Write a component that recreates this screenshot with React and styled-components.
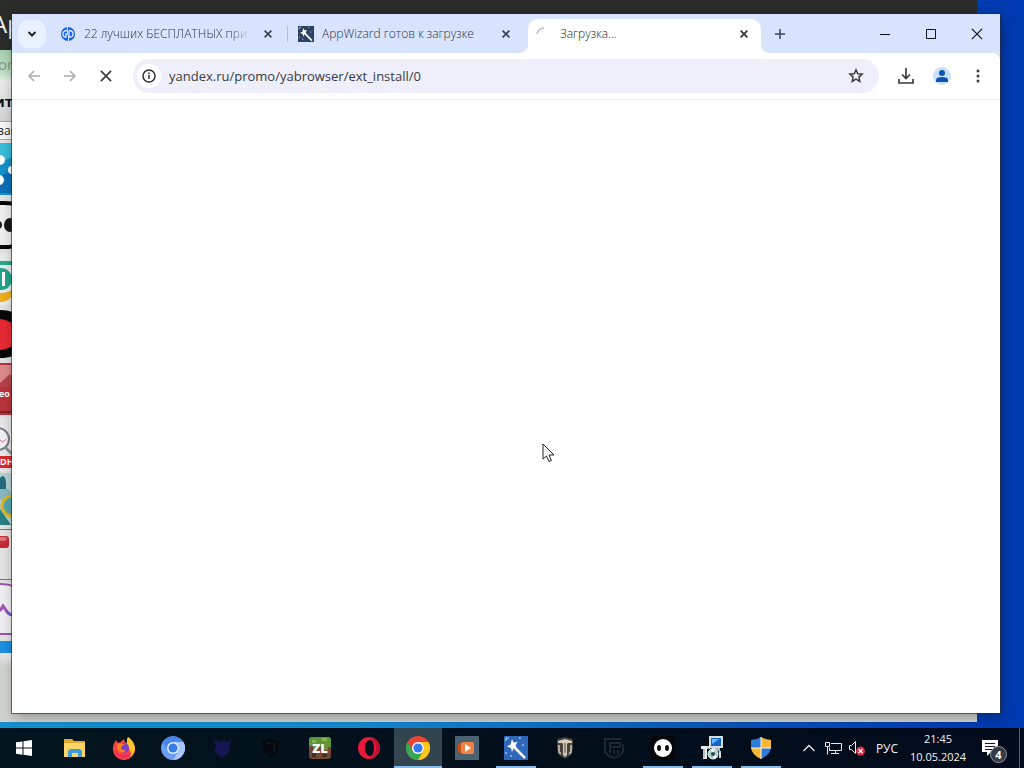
import styled, { createGlobalStyle } from "styled-components";

const GlobalStyle = createGlobalStyle`
  * {
    box-sizing: border-box;
  }

  body {
    margin: 0;
    font-family: "Open Sans", "Noto Sans", sans-serif;
  }

  button {
    border: 0;
    padding: 0;
    background: none;
    font: inherit;
    color: inherit;
  }
`;

const Screen = styled.div`
  display: flex;
  flex-direction: column;
  height: 100vh;
  overflow: hidden;
  background: linear-gradient(to right, #1690cc 0%, #118bd0 35%, #0a55bb 70%, #013bb2 94%);
`;

const Desktop = styled.main`
  flex: 1;
  position: relative;
`;

/* Store window behind the browser */

const StoreWindow = styled.section`
  position: absolute;
  inset: 0 47px 6px 0;
  overflow: hidden;
  display: flex;
  flex-direction: column;
  background: #d0d2cf;
`;

const StoreTitle = styled.header`
  height: 50px;
  padding-top: 8px;
  background: #2a2c29;
  color: #f4f4f4;
  font-size: 24px;
  line-height: 32px;
  text-indent: -8px;
`;

const StoreBanner = styled.div`
  height: 30px;
  background: linear-gradient(#a5cfae, #b9dcc0 70%, #dcebe0);
  color: #7d9a85;
  font-size: 15px;
  line-height: 28px;
  text-indent: -2px;
`;

const StoreHeading = styled.h2`
  height: 41px;
  margin: 0;
  background: linear-gradient(#ececec, #d2d2d4);
  color: #111;
  font-size: 15px;
  line-height: 42px;
  text-indent: -6px;
`;

const StoreFilter = styled.div`
  height: 19px;
  border: 1px solid #aaa;
  border-width: 1px 0;
  background: #f7f7f7;
  color: #222;
  font-size: 12px;
  line-height: 17px;
  text-indent: -3px;
`;

const TileList = styled.div`
  display: flex;
  flex-direction: column;
  gap: 3px;
  padding: 3px 0 6px;
  background: #e2e2e4;

  svg {
    display: block;
  }
`;

const StoreFooter = styled.div`
  height: 12px;
  background: #1c8ee0;
  box-shadow: 0 8px 8px #f2f2f4;
`;

/* Browser */

const BrowserWindow = styled.section`
  position: absolute;
  inset: 14px 24px 15px 12px;
  display: flex;
  flex-direction: column;
  background: #fff;
  box-shadow: 0 0 0 1px rgba(40, 44, 50, 0.65), 2px 3px 12px rgba(0, 0, 0, 0.35);
`;

const TabStrip = styled.div`
  display: flex;
  align-items: center;
  height: 39px;
  padding-left: 6px;
  background: #d8e3fe;
`;

const TabSearch = styled.button`
  display: grid;
  place-items: center;
  width: 28px;
  height: 28px;
  margin-right: 6px;
  border-radius: 10px;
  background: #e9f0ff;
`;

const Tab = styled.div`
  position: relative;
  display: flex;
  align-items: center;
  gap: 8px;
  flex: 0 1 ${({ $active }) => ($active ? "233px" : "238px")};
  min-width: 0;
  height: 29px;
  padding: 0 ${({ $active }) => ($active ? "9px" : "14px")} 0 8px;
  color: #2c3648;

  ${({ $active }) =>
    $active &&
    `
    align-self: flex-end;
    height: 34px;
    padding-bottom: 5px;
    border-radius: 10px 10px 0 0;
    background: #fff;
    color: #222;

    &::before,
    &::after {
      content: "";
      position: absolute;
      bottom: 0;
      width: 10px;
      height: 10px;
    }

    &::before {
      right: 100%;
      background: radial-gradient(circle at 0 0, transparent 10px, #fff 11px);
    }

    &::after {
      left: 100%;
      background: radial-gradient(circle at 100% 0, transparent 10px, #fff 11px);
    }
  `}

  ${({ $divider }) =>
    $divider &&
    `
    &::after {
      content: "";
      position: absolute;
      right: 2px;
      top: 7px;
      width: 1px;
      height: 16px;
      background: #a9bfe8;
    }
  `}
`;

const TabIcon = styled.svg`
  flex: none;
  width: 16px;
  height: 16px;
`;

const TabTitle = styled.span`
  flex: 1;
  min-width: 0;
  overflow: hidden;
  font-size: 12px;
  font-weight: 300;
  line-height: 18px;
  white-space: nowrap;
  margin-right: ${({ $fade }) => ($fade ? "2px" : "0")};
  mask-image: ${({ $fade }) => ($fade ? "linear-gradient(to left, transparent, #000 20px)" : "none")};
`;

const TabClose = styled.button`
  display: grid;
  place-items: center;
  flex: none;
  width: 16px;
  height: 16px;
`;

const NewTab = styled.button`
  display: grid;
  place-items: center;
  width: 28px;
  height: 28px;
  margin-left: 5px;
`;

const WindowControls = styled.div`
  display: flex;
  align-self: stretch;
  margin-left: auto;
`;

const WindowButton = styled.button`
  display: grid;
  place-items: center;
  width: 46px;
`;

const ToolbarBack = styled.div`
  background: #d8e3fe;
`;

const Toolbar = styled.div`
  display: flex;
  align-items: center;
  height: 47px;
  padding: 0 4px;
  border-bottom: 1px solid #e9ebf0;
  border-radius: 0 8px 0 0;
  background: #fff;
`;

const ToolButton = styled.button`
  display: grid;
  place-items: center;
  width: 36px;
  height: 34px;
  color: ${({ $dim }) => ($dim ? "#a9a9a9" : "#3c3c3e")};
`;

const AddressBar = styled.div`
  display: flex;
  align-items: center;
  flex: 1;
  min-width: 0;
  height: 34px;
  margin: 0 9px;
  padding: 0 5px 0 4px;
  border-radius: 17px;
  background: #eeeffb;
`;

const SiteInfo = styled.button`
  display: grid;
  place-items: center;
  width: 24px;
  height: 24px;
  border-radius: 12px;
  background: #fff;
`;

const Address = styled.input`
  flex: 1;
  min-width: 0;
  margin-left: 8px;
  padding: 0;
  border: 0;
  outline: 0;
  background: none;
  color: #3a3a3e;
  font-family: inherit;
  font-size: 13px;
  line-height: 20px;
`;

const Page = styled.div`
  flex: 1;
  background: #fff;
`;

const Pointer = styled.svg`
  position: absolute;
  left: 542px;
  top: 443px;
  width: 13px;
  height: 20px;
`;

/* Taskbar */

const Taskbar = styled.footer`
  display: flex;
  height: 40px;
  background: linear-gradient(to right, #02151f, #020e1a 60%, #010b1c);
  color: #f1f4f7;
`;

const StartButton = styled.button`
  display: grid;
  place-items: center;
  width: 48px;
  margin-right: 3px;
`;

const AppList = styled.nav`
  display: flex;
  gap: 1px;
`;

const AppButton = styled.button`
  display: flex;
  flex-direction: column;
  align-items: center;
  width: 48px;
  padding-top: 8px;
  background: ${({ $active }) => ($active ? "#33454f" : "transparent")};

  &::after {
    content: "";
    width: ${({ $active }) => ($active ? "48px" : "40px")};
    height: 2px;
    margin-top: auto;
    background: ${({ $active, $running }) => ($active || $running ? "#84bdec" : "transparent")};
  }
`;

const Tray = styled.div`
  display: flex;
  align-items: center;
  margin-left: auto;
  padding-right: 4px;
`;

const TrayButton = styled.button`
  display: grid;
  place-items: center;
  width: 24px;
  height: 40px;
`;

const Language = styled.button`
  width: 36px;
  height: 40px;
  font-size: 12px;
`;

const Clock = styled.button`
  width: 66px;
  height: 40px;
  font-size: 11px;
  line-height: 18px;
`;

const Notifications = styled.button`
  display: grid;
  place-items: center;
  position: relative;
  width: 49px;
  height: 40px;
  padding-right: 10px;
  border-right: 1px solid #56606b;
`;

const Badge = styled.span`
  position: absolute;
  left: 19px;
  top: 18px;
  width: 17px;
  height: 17px;
  border: 1px solid #8d949b;
  border-radius: 50%;
  background: #343b44;
  color: #fff;
  font-size: 11px;
  font-weight: 700;
  line-height: 15px;
`;

const tiles = [
  <>
    <rect width="12" height="52" fill="#1692c8" />
    <path d="M0 0h12v14L0 20z" fill="#37bcd8" />
    <path d="M0 34l12-8v24H0z" fill="#0c70b8" />
    <circle cx="0" cy="17" r="5" fill="#fff" />
    <circle cx="12" cy="27" r="4" fill="#fff" />
    <circle cx="-1" cy="37" r="5" fill="#fff" />
  </>,
  <>
    <path d="M-20 5h24q12 0 16 4v36q-4 4-16 4h-24z" fill="#eee" stroke="#090909" strokeWidth="4" />
    <circle cx="-2" cy="27" r="4" fill="#161616" />
    <ellipse cx="10" cy="27" rx="6" ry="7" fill="#161616" />
  </>,
  <>
    <rect width="12" height="52" fill="#e9ecea" />
    <path d="M0 8h12v4H0z" fill="#25a98a" />
    <circle cx="1" cy="26" r="11" fill="#22a58a" />
    <path d="M2 19h3v14H2z" fill="#fff" />
    <path d="M0 40q8 0 12-3v6q-4 6-12 6z" fill="#f0ad1c" />
  </>,
  <>
    <path d="M0 2q8 0 12 2v44q-4 2-12 2z" fill="#080808" />
    <path d="M0 11q9 1 12 5v22q-4 3-12 4z" fill="#e72a33" />
  </>,
  <>
    <rect width="12" height="52" fill="#b9343a" />
    <rect y="2" width="12" height="20" fill="#dc8b8b" />
    <path d="M0 20l10-9 2 3v10H0z" fill="#b84349" />
    <text x="-1" y="34" fill="#fff" fontSize="9" fontWeight="700">eo</text>
    <path d="M0 48h12v2H0z" fill="#7e2528" />
  </>,
  <>
    <rect width="12" height="52" fill="#e6e7e8" />
    <circle cx="-2" cy="21" r="11" fill="#eef0f4" stroke="#777b82" strokeWidth="2" />
    <path d="M0 22l3 2 3-3" fill="none" stroke="#d77886" />
    <path d="M5 29l7 7" stroke="#87919a" strokeWidth="3" />
    <rect y="38" width="12" height="12" fill="#d72a2b" />
    <text x="0" y="47" fill="#fff" fontSize="9" fontWeight="700">DH</text>
  </>,
  <>
    <rect width="12" height="52" fill="#b7d0d3" />
    <path d="M0 5q5-6 6 5v6H0z" fill="#246b82" />
    <path d="M0 16h8l4 6v5H0z" fill="#8ab8bf" />
    <circle cx="12" cy="33" r="10" fill="#55a7ad" stroke="#ddb524" strokeWidth="3" />
    <path d="M0 36l11 16H0z" fill="#268081" />
  </>,
  <>
    <rect width="12" height="52" fill="#e3e3e3" />
    <path d="M0 1h12v1H0zM0 51h12v1H0z" fill="#777" />
    <rect x="-8" y="8" width="17" height="12" rx="3" fill="#c42d39" />
    <rect x="-8" y="9" width="15" height="4" rx="2" fill="#dd7378" />
  </>,
  <>
    <rect width="12" height="52" fill="#efeff2" />
    <path d="M0 1q8 0 12 2M0 51h12" fill="none" stroke="#9854b3" strokeWidth="2" />
    <path d="M0 28l3-5 5 7 4 2" fill="none" stroke="#a653b4" strokeWidth="3" />
    <path d="M7 28l3 4 2-1" fill="none" stroke="#5863c8" strokeWidth="2" />
  </>,
];

const Cross = ({ size = 8, width = 1.7, color = "#374151" }) => (
  <svg width={size} height={size} viewBox="0 0 8 8" fill="none" stroke={color} strokeWidth={width}>
    <path d="M.6.6l6.8 6.8M7.4.6L.6 7.4" />
  </svg>
);

const Wand = () => (
  <>
    <path d="M9 10L21 22" stroke="#fff" strokeWidth="2.500" />
    <path d="M8 3l1.500 3.500 4-.500-2 3.500 2 3.500-4-.500L8 16l-1-4-4-1.500 3.500-2z" fill="#fff" />
    <path d="M2 2h3M2 2v3M15 2h2M2 16v2M18 9h2M6 20h2" stroke="#cfe3fb" strokeWidth="1" />
  </>
);

const apps = [
  {
    name: "Проводник",
    icon: (
      <>
        <path d="M1 3h8l2 2h11v16H1z" fill="#e3a932" />
        <path d="M1 7h21v14H1z" fill="#fcd667" />
        <path d="M5 21v-6l2-2h10l2 2v6h-4v-4H9v4z" fill="#3d9cdc" />
      </>
    ),
  },
  {
    name: "Firefox",
    icon: (
      <>
        <path d="M4 4l2 3 3-1q1-2 3-3 0 3 3 4 0-4 1-6 6 4 7 11a11 11 0 0 1-22 2Q0 9 4 4z" fill="#f8413d" />
        <path d="M16 1q6 4 7 11 0 6-5 9 1-8-3-13-1-4 1-7z" fill="#ffc72d" />
        <path d="M2 14q2 8 10 8 7 0 8-8-2 5-8 5-6 0-10-5z" fill="#ed2b68" />
        <circle cx="12" cy="12" r="5" fill="#7a43c6" />
        <path d="M5 8q5-2 8 1-4 0-4 3 1 3 5 2-2 4-6 2-4-2-3-8z" fill="#ff7d24" />
      </>
    ),
  },
  {
    name: "Chromium",
    icon: (
      <>
        <circle cx="12" cy="12" r="12" fill="#4d86ea" />
        <path d="M12 6h10.400A12 12 0 0 1 12 24l5-9a6 6 0 0 0-5-9z" fill="#a8c9fb" />
        <path d="M2 6a12 12 0 0 0 10 18l5-9-10 0z" fill="#6b9df2" />
        <circle cx="12" cy="12" r="6" fill="#e7f1ff" />
        <circle cx="12" cy="12" r="4.500" fill="#377be4" />
      </>
    ),
  },
  {
    name: "World of Warships",
    icon: <path d="M3 3l6 3 4-2 4 2 5-3-3 6 1 6-8 7-8-7 2-5z" fill="#141552" />,
  },
  {
    name: "Epic",
    icon: (
      <>
        <path d="M3 5l8-3 9 3v10l-8 7-8-6z" fill="#05090d" />
        <path d="M7 7h5M15 7v8" stroke="#18232a" strokeWidth="1" />
      </>
    ),
  },
  {
    name: "ZL",
    icon: (
      <>
        <rect x="1" y="1" width="22" height="22" rx="3" fill="#74472f" />
        <path d="M1 10V4q0-3 3-3h16q3 0 3 3v7h-3v3h-4v-3H9v2H5v-3z" fill="#5f963a" />
        <path d="M4 17h4v4H4zM14 18h5v3h-5z" fill="#492b20" />
        <path d="M4 4h4v3H4zM14 2h5v3h-5z" fill="#83b94c" />
        <text x="12" y="17" textAnchor="middle" fill="#fff" fontSize="13" fontWeight="800">ZL</text>
      </>
    ),
  },
  {
    name: "Opera",
    icon: (
      <>
        <path fillRule="evenodd" d="M12 1a11 11 0 1 0 0 22 11 11 0 0 0 0-22zm1 3c3 0 4 4 4 8s-1 8-4 8-5-4-5-8 2-8 5-8z" fill="#e91939" />
        <path d="M13 2q9 1 10 10-1 9-10 10 6-3 6-10T13 2z" fill="#b8102e" />
      </>
    ),
  },
  {
    name: "Google Chrome",
    active: true,
    icon: (
      <>
        <circle cx="12" cy="12" r="12" fill="#ea4335" />
        <path d="M1.600 6A12 12 0 0 0 12 24l5.200-9H6.800z" fill="#34a853" />
        <path d="M22.400 6H12a6 6 0 0 1 5.200 9L12 24A12 12 0 0 0 22.400 6z" fill="#fbc71b" />
        <circle cx="12" cy="12" r="6" fill="#fff" />
        <circle cx="12" cy="12" r="4.600" fill="#3478ef" />
      </>
    ),
  },
  {
    name: "Видео",
    icon: (
      <>
        <rect width="24" height="24" fill="#4b6272" />
        <rect x="3" y="7" width="14" height="10" rx="2" fill="#c95118" />
        <rect x="6" y="6" width="13" height="12" rx="2" fill="#f18143" />
        <path d="M10 8l6 4-6 4z" fill="#fff" />
      </>
    ),
  },
  {
    name: "AppWizard",
    running: true,
    icon: (
      <>
        <rect width="24" height="24" fill="#2e69b9" />
        <Wand />
      </>
    ),
  },
  {
    name: "World of Tanks",
    icon: (
      <>
        <path d="M4 3l4-1 4-1 4 1 4 1v10l-2 6-6 4-6-4-2-6z" fill="#453f39" />
        <path d="M5 5l7-2 7 2v2h-4l-1 1v11l-2 2-2-2V8L9 7H5z" fill="#d2cabb" />
        <path d="M6 9v7l2 2M18 9v7l-2 2" fill="none" stroke="#b4aa9b" strokeWidth="2" />
        <path d="M12 7v10" stroke="#453f38" />
      </>
    ),
  },
  {
    name: "Mir Tankov",
    icon: (
      <g fill="none" stroke="#1c2731" strokeWidth="2">
        <path d="M2 3h18M3 3v13l4 4 5 2 5-2 4-4V8" />
        <path d="M8 7h10v4H8zM8 11v6M12 14v4M16 14v4" />
      </g>
    ),
  },
  {
    name: "Store",
    running: true,
    icon: (
      <>
        <rect width="24" height="24" fill="#050708" />
        <circle cx="12" cy="12" r="9" fill="#fff" />
        <ellipse cx="8" cy="12" rx="2" ry="3" fill="#111" />
        <ellipse cx="16" cy="12" rx="2" ry="3" fill="#111" />
      </>
    ),
  },
  {
    name: "Установщик",
    running: true,
    icon: (
      <>
        <path d="M9 0h14v12H9z" fill="#d5dde2" />
        <path d="M11 2h10v8H11z" fill="#1565c4" />
        <path d="M12 3h7l-7 5z" fill="#67b8f4" />
        <path d="M12 12h8v3h-8z" fill="#abb6bd" />
        <path d="M1 10h9v3H7v10H3V13H1z" fill="#e8eaeb" />
        <path d="M4 13v9M8 11v2" stroke="#85919a" />
        <circle cx="13" cy="18" r="5" fill="#a8d1ca" stroke="#e9f6f3" />
        <path d="M13 18l-3-5 5-1zM13 18l5 3-4 2z" fill="#f3faf8" />
        <circle cx="13" cy="18" r="2" fill="#34424b" />
        <path d="M20 15v7" stroke="#d5dadd" strokeWidth="2" />
      </>
    ),
  },
  {
    name: "Безопасность",
    running: true,
    icon: (
      <>
        <path d="M12 1Q7 4 2 4v8h10z" fill="#2d7dd6" />
        <path d="M12 1q5 3 10 3v8H12z" fill="#f9b833" />
        <path d="M2 12h10v11Q3 19 2 12z" fill="#f9b833" />
        <path d="M12 12h10q-1 7-10 11z" fill="#2d7dd6" />
        <path d="M12 1v22M2 12h20" stroke="#f5f5f2" strokeWidth="1" />
      </>
    ),
  },
];

const Store = () => (
  <StoreWindow>
    <StoreTitle>Ap</StoreTitle>
    <StoreBanner>or</StoreBanner>
    <StoreHeading>ит</StoreHeading>
    <StoreFilter>вай</StoreFilter>
    <TileList>
      {tiles.map((tile, i) => (
        <svg key={i} width="12" height="52" viewBox="0 0 12 52">
          {tile}
        </svg>
      ))}
    </TileList>
    <StoreFooter />
  </StoreWindow>
);

const Tabs = () => (
  <TabStrip>
    <TabSearch aria-label="Поиск вкладок">
      <svg width="8" height="6" viewBox="0 0 8 6" fill="none" stroke="#24262b" strokeWidth="2">
        <path d="M.5 1L4 4.500 7.500 1" />
      </svg>
    </TabSearch>
    <Tab $divider>
      <TabIcon viewBox="0 0 16 16">
        <circle cx="8" cy="8" r="7" fill="#1463f0" />
        <path d="M7.500 1v6M8.500 9v6" stroke="#d8e3fe" strokeWidth="1" />
        <path d="M7 4.500Q3 4.500 3 8t3 3V8h2M9 4.500q4 0 4 3.500t-4 3V5" fill="none" stroke="#e7efff" strokeWidth="1.300" />
      </TabIcon>
      <TabTitle $fade>22 лучших БЕСПЛАТНЫХ приложений</TabTitle>
      <TabClose aria-label="Закрыть">
        <Cross />
      </TabClose>
    </Tab>
    <Tab>
      <TabIcon viewBox="0 0 24 24">
        <rect width="24" height="24" fill="#2c4263" />
        <Wand />
      </TabIcon>
      <TabTitle>AppWizard готов к загрузке</TabTitle>
      <TabClose aria-label="Закрыть">
        <Cross />
      </TabClose>
    </Tab>
    <Tab $active>
      <TabIcon viewBox="0 0 16 16">
        <path d="M1 8a7 7 0 0 1 7-6" fill="none" stroke="#bfc0c6" strokeWidth="1.500" />
      </TabIcon>
      <TabTitle>Загрузка...</TabTitle>
      <TabClose aria-label="Закрыть">
        <Cross color="#303134" />
      </TabClose>
    </Tab>
    <NewTab aria-label="Новая вкладка">
      <svg width="10" height="10" viewBox="0 0 10 10" stroke="#38445a" strokeWidth="1.500">
        <path d="M5 0v10M0 5h10" />
      </svg>
    </NewTab>
    <WindowControls>
      <WindowButton aria-label="Свернуть">
        <svg width="10" height="10" viewBox="0 0 10 10" shapeRendering="crispEdges">
          <path d="M0 5h10v1H0z" fill="#10131c" />
        </svg>
      </WindowButton>
      <WindowButton aria-label="Развернуть">
        <svg width="10" height="10" viewBox="0 0 10 10" fill="none" stroke="#10131c">
          <path d="M.5.5h9v9h-9z" />
        </svg>
      </WindowButton>
      <WindowButton aria-label="Закрыть окно">
        <Cross size={12} width={0.8} color="#10131c" />
      </WindowButton>
    </WindowControls>
  </TabStrip>
);

const NavBar = () => (
  <ToolbarBack>
    <Toolbar>
      <ToolButton $dim aria-label="Назад">
        <svg width="12" height="12" viewBox="0 0 12 12" fill="none" stroke="currentColor" strokeWidth="1.500">
          <path d="M12 6H1M6 1L1 6l5 5" />
        </svg>
      </ToolButton>
      <ToolButton $dim aria-label="Вперёд">
        <svg width="12" height="12" viewBox="0 0 12 12" fill="none" stroke="currentColor" strokeWidth="1.500">
          <path d="M0 6h11M6 1l5 5-5 5" />
        </svg>
      </ToolButton>
      <ToolButton aria-label="Остановить">
        <Cross size={12} width={1.1} color="#3c3c3e" />
      </ToolButton>
      <AddressBar>
        <SiteInfo aria-label="Сведения о сайте">
          <svg width="14" height="14" viewBox="0 0 14 14" fill="none" stroke="#2f3035" strokeWidth="1.500">
            <circle cx="7" cy="7" r="6" />
            <path d="M7 6v4M7 3.500V5" />
          </svg>
        </SiteInfo>
        <Address aria-label="Адрес" defaultValue="yandex.ru/promo/yabrowser/ext_install/0" />
        <ToolButton aria-label="Добавить в закладки">
          <svg width="16" height="16" viewBox="0 0 16 16" fill="none" stroke="currentColor" strokeWidth="1.500">
            <path d="M8 1.800l1.800 4 4.300.4-3.200 2.900.9 4.300L8 11.200l-3.800 2.200.9-4.300-3.200-2.900 4.300-.4z" />
          </svg>
        </ToolButton>
      </AddressBar>
      <ToolButton aria-label="Загрузки">
        <svg width="16" height="16" viewBox="0 0 16 16" fill="none" stroke="currentColor" strokeWidth="1.700">
          <path d="M8 0v10M4 6.500l4 4 4-4M1 11v4h14v-4" />
        </svg>
      </ToolButton>
      <ToolButton aria-label="Профиль">
        <svg width="20" height="20" viewBox="0 0 20 20">
          <circle cx="10" cy="10" r="9" fill="#c8e2fd" />
          <circle cx="10" cy="7" r="3" fill="#0e53ba" />
          <path d="M4 16v-2q0-3 6-3t6 3v2z" fill="#0e53ba" />
        </svg>
      </ToolButton>
      <ToolButton aria-label="Меню">
        <svg width="4" height="14" viewBox="0 0 4 14" fill="currentColor">
          <circle cx="2" cy="2" r="1.500" />
          <circle cx="2" cy="7" r="1.500" />
          <circle cx="2" cy="12" r="1.500" />
        </svg>
      </ToolButton>
    </Toolbar>
  </ToolbarBack>
);

const SystemTray = () => (
  <Tray>
    <TrayButton aria-label="Скрытые значки">
      <svg width="12" height="8" viewBox="0 0 12 8" fill="none" stroke="#e8ecef" strokeWidth="1.300">
        <path d="M.5 7L6 1.500 11.500 7" />
      </svg>
    </TrayButton>
    <TrayButton aria-label="Сеть">
      <svg width="17" height="14" viewBox="0 0 17 14" fill="none" stroke="#e8ecef">
        <path d="M6 2.500h10.500v7H4.500v-3M10.500 9.500v3M6 12.500h8" />
        <path d="M.5 1.500h4v4h-4zM2.500 5.500v8" />
      </svg>
    </TrayButton>
    <TrayButton aria-label="Звук отключён">
      <svg width="18" height="16" viewBox="0 0 18 16" fill="none">
        <path d="M1.500 5.500h2l4-4v12l-4-4h-2z" stroke="#e8ecef" />
        <circle cx="12.500" cy="11" r="4.500" fill="#d92c43" />
        <path d="M10.500 9l4 4M14.500 9l-4 4" stroke="#fff" strokeWidth="1.200" />
      </svg>
    </TrayButton>
    <Language>РУС</Language>
    <Clock>
      21:45
      <br />
      10.05.2024
    </Clock>
    <Notifications aria-label="Уведомления">
      <svg width="16" height="16" viewBox="0 0 16 16">
        <path d="M0 0h16v12H9l-4 4v-4H0z" fill="#fff" />
        <path d="M3 3.500h10M3 6.500h10M3 9.500h7" stroke="#0a1522" />
      </svg>
      <Badge>4</Badge>
    </Notifications>
  </Tray>
);

const App = () => {
  return (
    <Screen>
      <GlobalStyle />
      <Desktop>
        <Store />
        <BrowserWindow>
          <Tabs />
          <NavBar />
          <Page />
        </BrowserWindow>
        <Pointer viewBox="0 0 13 20">
          <path d="M1 1v15l3.500-3 2.500 5.500 2.500-1L7 12h5z" fill="#fff" stroke="#222" />
        </Pointer>
      </Desktop>
      <Taskbar>
        <StartButton aria-label="Пуск">
          <svg width="16" height="16" viewBox="0 0 16 16" fill="#fff">
            <path d="M0 2.300l6.500-.9v6.200H0zM7.500 1.200L16 0v7.600H7.500zM0 8.500h6.500v6.200L0 13.800zM7.500 8.500H16V16l-8.500-1.200z" />
          </svg>
        </StartButton>
        <AppList>
          {apps.map(({ name, icon, active, running }) => (
            <AppButton key={name} aria-label={name} $active={active} $running={running}>
              <svg width="24" height="24" viewBox="0 0 24 24">
                {icon}
              </svg>
            </AppButton>
          ))}
        </AppList>
        <SystemTray />
      </Taskbar>
    </Screen>
  );
};

export default App;
